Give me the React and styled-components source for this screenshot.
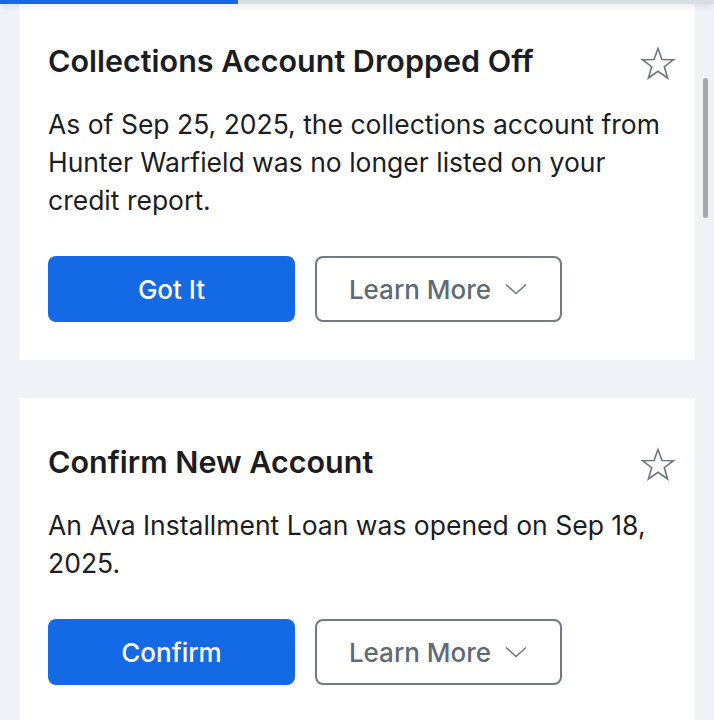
import React from 'react';
import styled, { createGlobalStyle } from 'styled-components';

const GlobalStyle = createGlobalStyle`
  html, body {
    margin: 0;
    padding: 0;
    background: #eff3f7;
    font-family: Inter, "Noto Sans", "Liberation Sans", sans-serif;
    -webkit-font-smoothing: antialiased;
  }
`;

const Page = styled.div`
  position: relative;
  height: 720px;
  overflow: hidden;
  background: #eff3f7;
`;

const Progress = styled.div`
  position: absolute;
  top: 0;
  left: 0;
  right: 0;
  height: 4px;
  background: #d9dee3;
  box-shadow: 0 2px 6px rgba(0, 0, 0, 0.12);
  z-index: 2;
`;

const ProgressFill = styled.div`
  height: 100%;
  background: #1769e0;
`;

const ScrollThumb = styled.div`
  position: absolute;
  top: 78px;
  right: 6px;
  width: 5px;
  height: 140px;
  border-radius: 3px;
  background: #a7a9ab;
  z-index: 2;
`;

const CardList = styled.div`
  display: flex;
  flex-direction: column;
  gap: 38px;
  margin-top: -3px;
  padding: 0 19px;
`;

const Card = styled.section`
  background: #ffffff;
  padding: 47px 19px 38px 29px;
`;

const Header = styled.div`
  display: flex;
  justify-content: space-between;
  align-items: flex-start;
`;

const Title = styled.h2`
  margin: 0;
  font-size: 30.5px;
  line-height: 34px;
  font-weight: 600;
  color: #1b1d1f;
`;

const StarButton = styled.button`
  border: none;
  background: none;
  padding: 0;
  margin: 2px 0 -4px;
  width: 36px;
  height: 36px;
  display: flex;
  align-items: center;
  justify-content: center;
`;

const Body = styled.p`
  margin: 27px 0 0;
  padding-right: 6px;
  font-size: 26.5px;
  line-height: 38px;
  font-weight: 400;
  color: #1b1d1f;
`;

const Actions = styled.div`
  display: flex;
  gap: 20px;
  margin-top: 37px;
`;

const Button = styled.button`
  width: 247px;
  height: 66px;
  border-radius: 8px;
  font-family: inherit;
  font-size: 26px;
  font-weight: 500;
  display: flex;
  align-items: center;
  justify-content: center;
  gap: 13px;
  cursor: pointer;
  background: ${p => (p.$primary ? '#1469e4' : '#ffffff')};
  color: ${p => (p.$primary ? '#ffffff' : '#5f6b73')};
  border: ${p => (p.$primary ? 'none' : '2px solid #6f7a82')};
`;

const StarIcon = () => (
  <svg width="36" height="36" viewBox="0 0 36 36" fill="none">
    <polygon
      points="18,2.5 22,13.5 33.5,13.7 24.3,20.7 27.6,32 18,25.3 8.4,32 11.7,20.7 2.5,13.7 14,13.5"
      stroke="#6b767e"
      strokeWidth="1.6"
      strokeLinejoin="miter"
    />
  </svg>
);

const Chevron = () => (
  <svg width="24" height="14" viewBox="0 0 24 14" fill="none">
    <polyline points="2,2.5 12,11.5 22,2.5" stroke="#6b767e" strokeWidth="1.5" />
  </svg>
);

const ALERTS = [
  {
    id: 'collections',
    title: 'Collections Account Dropped Off',
    body: 'As of Sep 25, 2025, the collections account from Hunter Warfield was no longer listed on your credit report.',
    action: 'Got It'
  },
  {
    id: 'new-account',
    title: 'Confirm New Account',
    body: 'An Ava Installment Loan was opened on Sep 18, 2025.',
    action: 'Confirm'
  }
];

export default function App() {
  return (
    <Page>
      <GlobalStyle />
      <Progress>
        <ProgressFill style={{ width: '238px' }} />
      </Progress>
      <ScrollThumb />
      <CardList>
        {ALERTS.map(alert => (
          <Card key={alert.id}>
            <Header>
              <Title>{alert.title}</Title>
              <StarButton aria-label="Favorite">
                <StarIcon />
              </StarButton>
            </Header>
            <Body>{alert.body}</Body>
            <Actions>
              <Button $primary>{alert.action}</Button>
              <Button>
                Learn More
                <Chevron />
              </Button>
            </Actions>
          </Card>
        ))}
      </CardList>
    </Page>
  );
}
